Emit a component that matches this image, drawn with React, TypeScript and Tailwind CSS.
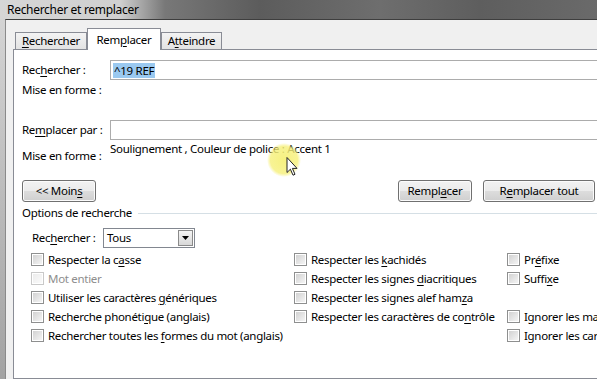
import type { ReactNode } from "react";

// "&" marque la lettre de raccourci soulignée
function Ak({ t }: { t: string }) {
  const i = t.indexOf("&");
  if (i < 0) return <>{t}</>;
  return (
    <>
      {t.slice(0, i)}
      <span className="underline decoration-1 underline-offset-[2px]">{t[i + 1]}</span>
      {t.slice(i + 2)}
    </>
  );
}

function Tab({ label, active, w }: { label: string; active?: boolean; w: string }) {
  return (
    <div
      className={
        active
          ? `relative z-10 -mb-px flex h-[22px] items-start justify-center border border-b-0 border-[#898c95] bg-white pt-[3px] ${w}`
          : `flex h-[17px] items-center justify-center border border-b-0 border-[#898c95] bg-[linear-gradient(#f3f3f3,#e3e3e3)] ${w}`
      }
    >
      <Ak t={label} />
    </div>
  );
}

function Btn({ label, w }: { label: string; w: string }) {
  return (
    <div
      className={`flex h-[22px] items-center justify-center rounded-[3px] border border-[#707070] bg-[linear-gradient(#f2f2f2_0%,#ebebeb_49%,#dddddd_50%,#cfcfcf_100%)] shadow-[inset_0_0_0_1px_#fbfbfb] ${w}`}
    >
      <Ak t={label} />
    </div>
  );
}

function Check({ label, disabled }: { label?: string; disabled?: boolean }) {
  if (!label) return <div />;
  return (
    <div className="flex h-[19px] items-center gap-[4px]">
      <span
        className={`flex size-[13px] shrink-0 items-center justify-center border ${
          disabled ? "border-[#c9c9c9]" : "border-[#8e8f8f]"
        } bg-white`}
      >
        <span
          className={`size-[9px] ${
            disabled
              ? "bg-[linear-gradient(135deg,#ececec,#fafafa)]"
              : "bg-[linear-gradient(135deg,#d2d2d2,#f4f4f4)]"
          }`}
        />
      </span>
      <span className={`whitespace-nowrap ${disabled ? "text-[#8d8d8d]" : ""}`}>
        <Ak t={label} />
      </span>
    </div>
  );
}

function Field({ children }: { children?: ReactNode }) {
  return (
    <div className="flex h-[20px] flex-1 items-center border border-[#acacac] bg-white pl-[2px]">
      {children}
    </div>
  );
}

const ROWS: [string, string, string][] = [
  ["Respecter la c&asse", "Respecter les &kachidés", "Pr&éfixe"],
  ["Mot entier", "Respecter les signes &diacritiques", "Suffi&xe"],
  ["Utiliser les caractères &génériques", "Respecter les signes alef ham&za", ""],
  ["Recherche phonéti&que (anglais)", "Respecter les caractères de co&ntrôle", "Ignorer les marques de ponctuation"],
  ["Rechercher toutes les &formes du mot (anglais)", "", "Ignorer les caractères d'espacement"],
];

export default function App() {
  return (
    <div className="relative flex h-[379px] w-[597px] flex-col overflow-hidden bg-[#d0d0d0] font-['Noto_Sans',sans-serif] text-[11.5px] leading-[16px] tracking-[-0.3px] text-black">
      {/* Barre de titre */}
      <div className="flex h-[19px] shrink-0 items-center bg-[linear-gradient(90deg,#d6d6d6_0px,#d0d0d0_120px,#787878_165px,#5c5c5c_260px,#6e6e6e_380px,#5e5e5e_480px,#6a6a6a_597px)] pl-[7px] text-[12px]">
        Rechercher et remplacer
      </div>

      <div className="flex min-h-0 flex-1">
        <div className="w-[5px] shrink-0 bg-[linear-gradient(#d4d4d4,#a2a2a2)]" />
        <div className="flex min-h-0 min-w-0 flex-1 flex-col border-t border-l border-t-[#3e3e3e] border-l-[#8a8a8a] bg-[#f0f0f0] pt-[8px] pl-[7px]">
          {/* Onglets */}
          <div className="flex h-[21px] shrink-0 items-end pl-[2px]">
            <Tab label="&Rechercher" w="w-[72px]" />
            <Tab label="Rem&placer" w="w-[74px]" active />
            <Tab label="A&tteindre" w="w-[61px]" />
          </div>

          <div className="flex w-[640px] shrink-0 flex-1 flex-col border border-[#898c95] bg-white pl-[8px]">
            <div className="mt-[10px] flex h-[20px] items-center">
              <span className="w-[88px] shrink-0">
                <Ak t="Rec&hercher :" />
              </span>
              <Field>
                <span className="bg-[#9ac9f0] px-px leading-[15px]">^19 REF</span>
              </Field>
            </div>
            <div className="flex h-[20px] items-center">Mise en forme :</div>

            <div className="mt-[20px] flex h-[20px] items-center">
              <span className="w-[88px] shrink-0">
                <Ak t="Re&mplacer par :" />
              </span>
              <Field />
            </div>
            <div className="flex h-[40px] items-start">
              <span className="mt-[8px] w-[88px] shrink-0">Mise en forme :</span>
              <span className="mt-px">Soulignement , Couleur de police : Accent 1</span>
            </div>

            <div className="flex w-[573px] items-center">
              <Btn label="<< Moin&s" w="w-[74px]" />
              <div className="ml-auto">
                <Btn label="Rempl&acer" w="w-[74px]" />
              </div>
              <div className="ml-[11px]">
                <Btn label="R&emplacer tout" w="w-[112px]" />
              </div>
            </div>

            <div className="mt-[3px] flex items-center gap-[6px]">
              <span>Options de recherche</span>
              <div className="h-px flex-1 bg-[#d5dfe5]" />
            </div>

            <div className="mt-[7px] flex h-[20px] items-center pl-[10px]">
              <span className="w-[71px]">
                <Ak t="Rec&hercher :" />
              </span>
              <div className="flex h-[20px] w-[92px] items-center border border-[#828790] bg-white pl-[3px]">
                <span className="flex-1">Tous</span>
                <div className="mr-px flex h-[16px] w-[15px] items-center justify-center border border-[#8a8a8a] bg-[linear-gradient(#f4f4f4,#d8d8d8)]">
                  <svg width="7" height="4" viewBox="0 0 7 4">
                    <path d="M0 0h7L3.5 4z" fill="#000" />
                  </svg>
                </div>
              </div>
            </div>

            <div className="mt-[2px] grid grid-cols-[263px_213px_1fr] pl-[9px]">
              {ROWS.map((r, i) => (
                <div key={i} className="contents">
                  <Check label={r[0]} disabled={i === 1} />
                  <Check label={r[1]} />
                  <Check label={r[2]} />
                </div>
              ))}
            </div>
          </div>
        </div>
      </div>

      {/* Curseur avec halo */}
      <svg
        className="pointer-events-none absolute top-[143px] left-[266px]"
        width="36"
        height="38"
        viewBox="0 0 36 38"
      >
        <defs>
          <radialGradient id="halo">
            <stop offset="0%" stopColor="#f6f07a" stopOpacity="0.95" />
            <stop offset="80%" stopColor="#f6f07a" stopOpacity="0.8" />
            <stop offset="100%" stopColor="#f6f07a" stopOpacity="0" />
          </radialGradient>
        </defs>
        <circle cx="18" cy="17" r="17" fill="url(#halo)" />
        <path
          d="M21 14.5v15l3.4-3.3 2.6 6 2-0.9-2.6-5.9h4.6z"
          fill="#fff"
          stroke="#222"
          strokeWidth="1"
          strokeLinejoin="round"
        />
      </svg>
    </div>
  );
}
